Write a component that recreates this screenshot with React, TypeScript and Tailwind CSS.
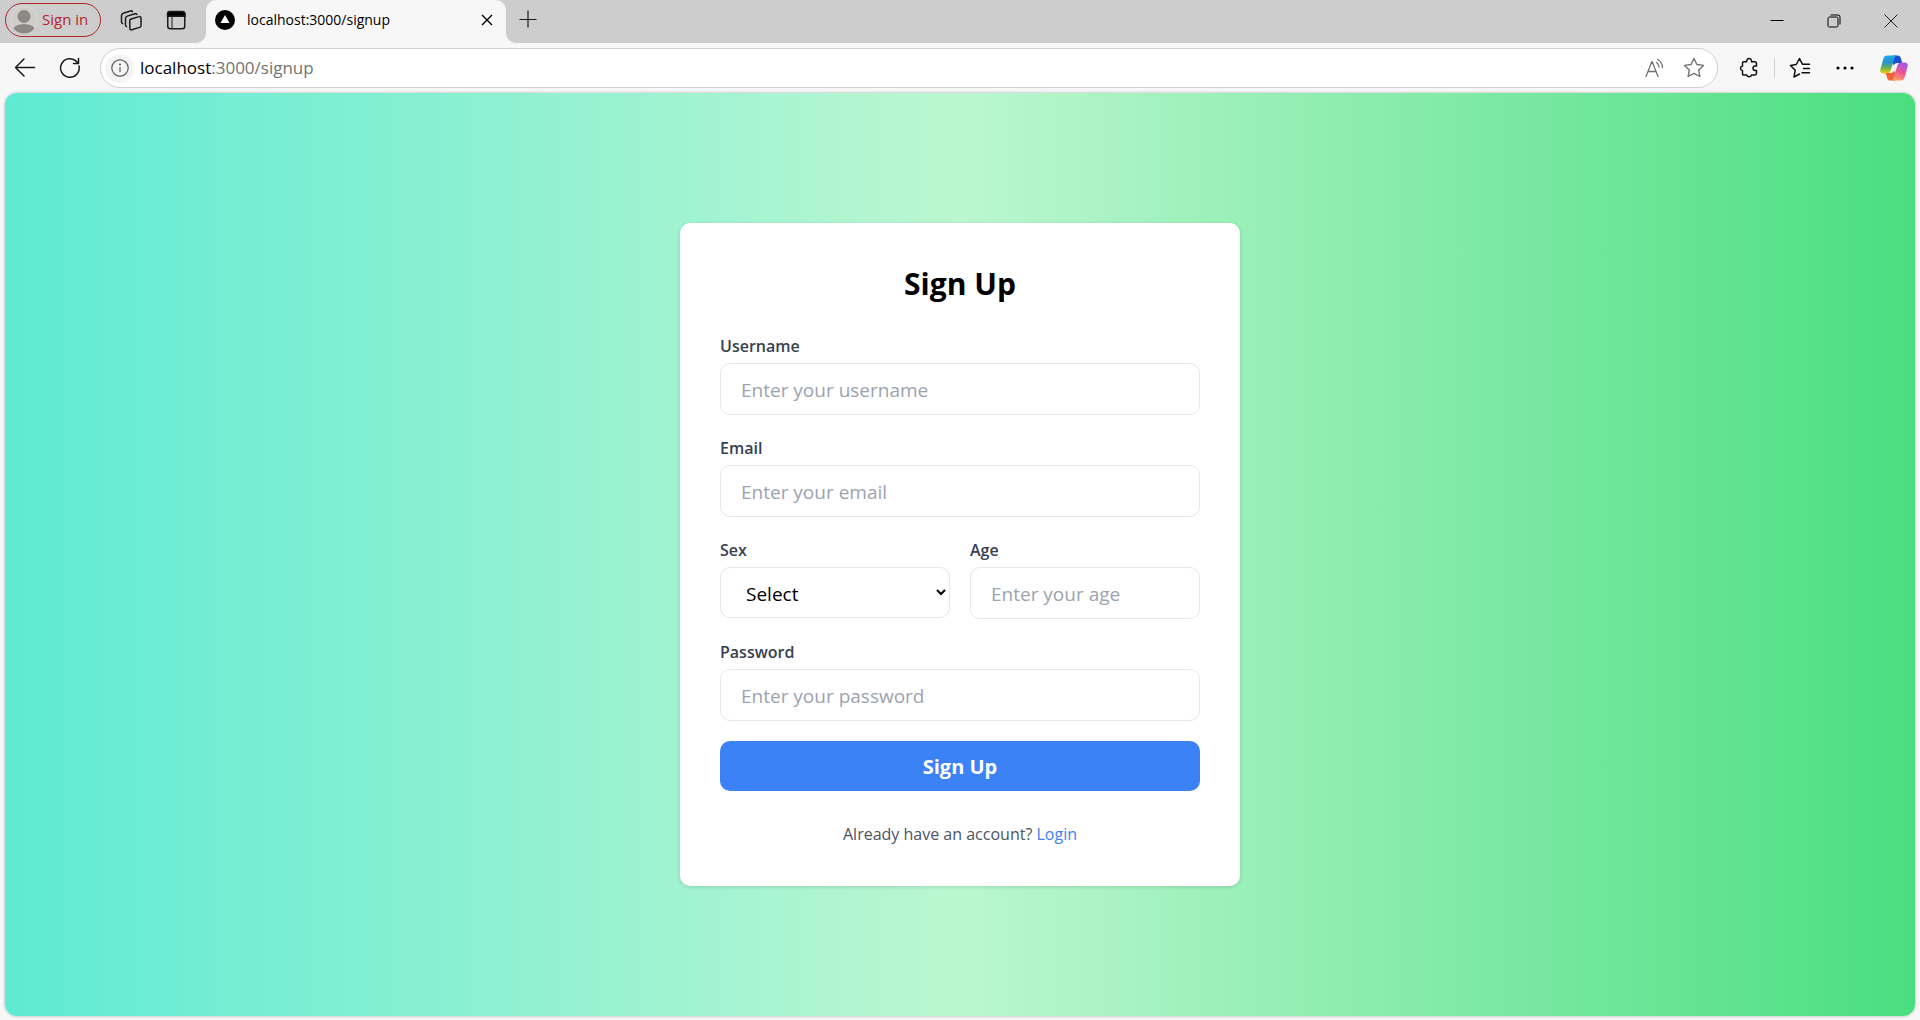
import { ReactNode } from 'react';

const field =
  'mt-[3px] block w-full rounded-[10px] border border-gray-200 bg-white px-5 pt-[11px] pb-[9px] text-[19px] leading-[30px] text-black placeholder:text-[#9ca3af] outline-none focus:border-blue-500';
const selectField =
  'mt-[3px] block h-[51px] w-full rounded-[10px] border border-gray-200 bg-white pl-[21px] pr-[18px] pt-[11px] pb-[9px] text-[19px] leading-[30px] text-black outline-none focus:border-blue-500';

function Field({ id, label, children }: { id: string; label: string; children: ReactNode }) {
  return (
    <div>
      <label htmlFor={id} className="block text-[16px] font-semibold leading-[27px] text-[#374151]">
        {label}
      </label>
      {children}
    </div>
  );
}

function TitleBar() {
  return (
    <header className="flex h-[43px] shrink-0 items-start bg-[#cdcdcd]">
      <button className="ml-[5px] mt-[3px] flex h-[34px] w-24 items-center gap-1 rounded-full border border-[#b3262c] pb-px pl-1 text-[15px] text-[#b3262c]">
        <svg viewBox="0 0 28 28" className="size-7 shrink-0">
          <circle cx="14" cy="14" r="13.5" fill="#d0cdc9" stroke="#dedbd7" />
          <circle cx="14" cy="10.5" r="6.5" fill="#8b8886" />
          <path d="M3.5 22.5C5 19.5 9 18.3 14 18.3s9 1.2 10.500 4.200A13.500 13.500 0 0 1 3.500 22.500z" fill="#8b8886" />
        </svg>
        Sign in
      </button>
      <button aria-label="Workspaces" className="ml-[18px] mt-2 size-6">
        <svg viewBox="0 0 24 24" className="size-6" fill="none" stroke="#1b1b1b" strokeWidth="1.5" strokeLinejoin="round" strokeLinecap="round">
          <path d="M11.500 11.200l8.500-2.600a1.500 1.500 0 0 1 2 1.400v7.500a2 2 0 0 1-1.400 1.900l-7.800 2.400a1.500 1.500 0 0 1-2-1.400v-7.300a2 2 0 0 1 .7-1.900z" />
          <path d="M7.500 18.500c-.8-.3-1-.8-1-1.500v-6.500c0-1.200.6-2 1.700-2.400l7.800-2.400c.9-.2 1.500 0 1.900.7" />
          <path d="M3.500 15.500c-.8-.3-1-.8-1-1.500V7.700c0-1.200.6-2 1.700-2.400L11.500 3c.9-.3 1.500 0 1.900.6" />
        </svg>
      </button>
      <button aria-label="Tab actions" className="ml-[21px] mt-2 size-6">
        <svg viewBox="0 0 24 24" className="size-6" fill="none" stroke="#1b1b1b" strokeWidth="1.500">
          <rect x="3.750" y="3.750" width="17" height="17" rx="2.500" />
          <path d="M3.500 6a2.500 2.500 0 0 1 2.500-2.500h12.500a2.500 2.500 0 0 1 2.500 2.500v2.200H3.500z" fill="#000" />
          <path d="M8 8v12.500" strokeWidth="1" />
        </svg>
      </button>
      <div className="flex h-[43px] items-end">
        <div className="ml-2 h-[43px] w-2.5 bg-[#f7f7f7]">
          <div className="h-full rounded-br-[10px] bg-[#cdcdcd]" />
        </div>
        <div className="flex h-[43px] w-[300px] items-center rounded-t-[10px] bg-[#f7f7f7] pb-1 pl-[9px] pr-3">
          <svg viewBox="0 0 20 20" className="size-5 shrink-0">
            <circle cx="10" cy="10" r="10" />
            <path d="M10 5l4.500 8h-9z" fill="#fff" />
          </svg>
          <span className="ml-3 flex-1 text-[14px] text-black">localhost:3000/signup</span>
          <button aria-label="Close tab">
            <svg viewBox="0 0 14 14" className="size-3.5" stroke="#000" strokeWidth="1.400">
              <path d="M2 2l10 10M12 2L2 12" />
            </svg>
          </button>
        </div>
        <div className="h-[43px] w-2.5 bg-[#f7f7f7]">
          <div className="h-full rounded-bl-[10px] bg-[#cdcdcd]" />
        </div>
      </div>
      <button aria-label="New tab" className="ml-[3px] mt-2.5">
        <svg viewBox="0 0 18 18" className="size-[18px]" stroke="#1b1b1b" strokeWidth="1.200">
          <path d="M9 0.500v17M0.500 9.500h17" />
        </svg>
      </button>
      <div className="ml-auto flex h-[43px] items-center pb-px">
        <button aria-label="Minimize" className="flex w-[57px] justify-center">
          <svg viewBox="0 0 14 14" className="size-3.5" stroke="#000">
            <path d="M.500 6.500h13" />
          </svg>
        </button>
        <button aria-label="Restore" className="flex w-[57px] justify-center">
          <svg viewBox="0 0 14 14" className="size-3.5" fill="none" stroke="#000">
            <rect x="1" y="3" width="10" height="10" rx="1.500" />
            <path d="M3.500 1H11a2 2 0 0 1 2 2v7.500" />
          </svg>
        </button>
        <button aria-label="Close" className="flex w-[58px] justify-center">
          <svg viewBox="0 0 14 14" className="size-3.5" stroke="#222">
            <path d="M.500 .500l13 13M13.500 .500l-13 13" />
          </svg>
        </button>
      </div>
    </header>
  );
}

function CopilotLogo() {
  return (
    <svg viewBox="0 0 28 26" className="size-7">
      <defs>
        <linearGradient id="cpLeft" x1="0" y1="0" x2="0" y2="1">
          <stop offset="0" stopColor="#1aa7ee" />
          <stop offset=".4" stopColor="#2795c9" />
          <stop offset=".7" stopColor="#6fb544" />
          <stop offset="1" stopColor="#f5cc0a" />
        </linearGradient>
        <linearGradient id="cpRight" x1=".3" y1="1" x2=".7" y2="0">
          <stop offset="0" stopColor="#a055f0" />
          <stop offset=".5" stopColor="#ee5396" />
          <stop offset="1" stopColor="#ffa25c" />
        </linearGradient>
      </defs>
      <path d="M13 .5h4.500c2 0 2.800.9 3.300 2.600L22.300 8h-4.800c-2 0-3 .8-3.600 2.500L11 5z" fill="#1d4fd0" />
      <path d="M7.500.5H17.500c-1.700 0-2.800 1.500-3.500 4L10.800 15c-.7 2.300-1.700 3.500-3.800 3.500H3.500C.8 18.500-.2 16.500.5 14L3.300 4C4 1.500 5.300.5 7.500.5z" fill="url(#cpLeft)" />
      <g transform="rotate(180 14 13)">
        <path d="M13 .5h4.500c2 0 2.800.9 3.300 2.600L22.300 8h-4.800c-2 0-3 .8-3.600 2.500L11 5z" fill="#f2623a" />
        <path d="M7.500.5H17.500c-1.700 0-2.800 1.500-3.500 4L10.800 15c-.7 2.300-1.700 3.500-3.800 3.500H3.500C.8 18.500-.2 16.500.5 14L3.300 4C4 1.500 5.300.5 7.500.5z" fill="url(#cpRight)" />
      </g>
    </svg>
  );
}

function Toolbar() {
  return (
    <nav className="flex h-[50px] shrink-0 items-center bg-[#f7f7f7] pl-3 pr-3">
      <button aria-label="Back">
        <svg viewBox="0 0 26 26" className="size-[26px]" fill="none" stroke="#1b1b1b" strokeWidth="1.500" strokeLinecap="round" strokeLinejoin="round">
          <path d="M22.500 12.500H3.500M12 4L3.500 12.500l8.500 8.500" />
        </svg>
      </button>
      <button aria-label="Refresh" className="ml-[19px]">
        <svg viewBox="0 0 26 26" className="size-[26px]" fill="none" stroke="#1b1b1b" strokeWidth="1.500" strokeLinecap="round" strokeLinejoin="round">
          <path d="M22 11a9.300 9.300 0 1 1-2.500-4.600L21.500 8.500M21.500 3.500v5h-5" />
        </svg>
      </button>
      <div className="ml-[17px] flex h-10 flex-1 items-center rounded-full border border-[#cfcfcf] bg-white pl-1 pr-3">
        <span className="flex size-[29px] items-center justify-center rounded-full bg-[#f4f4f4]">
          <svg viewBox="0 0 18 18" className="size-[18px]" fill="none" stroke="#5f5f5f" strokeWidth="1.200">
            <circle cx="9" cy="9" r="8.200" />
            <path d="M9 8v5" />
            <circle cx="9" cy="5.500" r=".5" fill="#5f5f5f" />
          </svg>
        </span>
        <span className="ml-1.5 flex-1 text-[17px] text-[#737373]">
          <span className="text-black">localhost</span>:3000/signup
        </span>
        <button aria-label="Read aloud">
          <svg viewBox="0 0 22 22" className="size-[22px]" fill="none" stroke="#737373" strokeWidth="1.300" strokeLinecap="round">
            <path d="M2 19.500L7.700 5h.6L14 19.500M4 14.500h8M12.500 5.500c1.600 1 2.500 2.500 2.600 4.500M13.500 2.500c3 1.500 4.800 4.200 5 8" />
          </svg>
        </button>
        <button aria-label="Add to favorites" className="ml-[17px]">
          <svg viewBox="0 0 22 22" className="size-[22px]" fill="none" stroke="#737373" strokeWidth="1.400" strokeLinejoin="round">
            <path d="M11 1.500l2.900 6 6.600.9-4.800 4.600 1.200 6.500-5.900-3.100-5.900 3.100 1.200-6.500L1.500 8.400l6.600-.9z" />
          </svg>
        </button>
      </div>
      <button aria-label="Extensions" className="ml-5">
        <svg viewBox="0 0 22 22" className="size-[22px]" fill="none" stroke="#111" strokeWidth="1.500" strokeLinejoin="round">
          <path d="M4.500 6a1.200 1.200 0 0 1 1.200-1.200h3a2.500 2.500 0 1 1 4.800 0h3.300A1.700 1.700 0 0 1 18.500 6.500V9h-1.300a2.200 2.200 0 0 0 0 4.400h1.300v2.900a1.700 1.700 0 0 1-1.700 1.700h-3.300a2.500 2.500 0 0 1-4.800 0h-3a1.200 1.200 0 0 1-1.200-1.200v-3a2.500 2.500 0 0 1 0-4.900z" />
        </svg>
      </button>
      <span className="ml-3.5 h-5 w-px bg-[#d0d0d0]" />
      <button aria-label="Favorites" className="ml-3.5">
        <svg viewBox="0 0 22 22" className="size-[22px]" fill="none" stroke="#111" strokeWidth="1.500" strokeLinejoin="round" strokeLinecap="round">
          <path d="M10.500 17l-5.500 3 1.200-6.700L1.500 8.400l5.700-.9L10.500 1.500l3 5.800h7M14.500 11.500h6M13 15.700h7.500" />
        </svg>
      </button>
      <button aria-label="Settings and more" className="ml-[23px]">
        <svg viewBox="0 0 22 22" className="size-[22px]">
          <circle cx="4" cy="11" r="1.600" />
          <circle cx="11" cy="11" r="1.600" />
          <circle cx="18" cy="11" r="1.600" />
        </svg>
      </button>
      <button aria-label="Copilot" className="ml-6">
        <CopilotLogo />
      </button>
    </nav>
  );
}

export default function App() {
  return (
    <div className="flex min-h-screen flex-col bg-[#f7f7f7] font-['Open_Sans','Noto_Sans',sans-serif]">
      <TitleBar />
      <Toolbar />
      <main className="mx-[5px] mb-1 flex flex-1 items-center justify-center rounded-xl bg-[linear-gradient(to_right,#5eead4,#bbf7d0,#4ade80)] shadow-[0_0_3px_rgba(0,0,0,0.3)]">
        <section className="w-full max-w-[560px] rounded-[10px] bg-white px-10 pb-[38px] pt-10 shadow-[0_1px_4px_rgba(0,0,0,0.14)]">
          <h1 className="mb-7 text-center text-[30px] font-bold leading-[42px] text-black">Sign Up</h1>
          <form onSubmit={(e) => e.preventDefault()} className="flex flex-col gap-5">
            <Field id="username" label="Username">
              <input id="username" type="text" placeholder="Enter your username" className={field} />
            </Field>
            <Field id="email" label="Email">
              <input id="email" type="email" placeholder="Enter your email" className={field} />
            </Field>
            <div className="grid grid-cols-2 gap-5">
              <Field id="sex" label="Sex">
                <select id="sex" className={selectField}>
                  <option>Select</option>
                  <option>Male</option>
                  <option>Female</option>
                </select>
              </Field>
              <Field id="age" label="Age">
                <input id="age" type="number" placeholder="Enter your age" className={field} />
              </Field>
            </div>
            <Field id="password" label="Password">
              <input id="password" type="password" placeholder="Enter your password" className={field} />
            </Field>
            <button type="submit" className="h-[50px] rounded-[10px] bg-[#3b82f6] pt-0.5 text-[20px] font-bold text-white">
              Sign Up
            </button>
          </form>
          <p className="mt-[30px] text-center text-[16px] leading-[27px] text-[#4b5563]">
            Already have an account?{' '}
            <a href="#login" className="text-[#3b82f6]">
              Login
            </a>
          </p>
        </section>
      </main>
    </div>
  );
}
